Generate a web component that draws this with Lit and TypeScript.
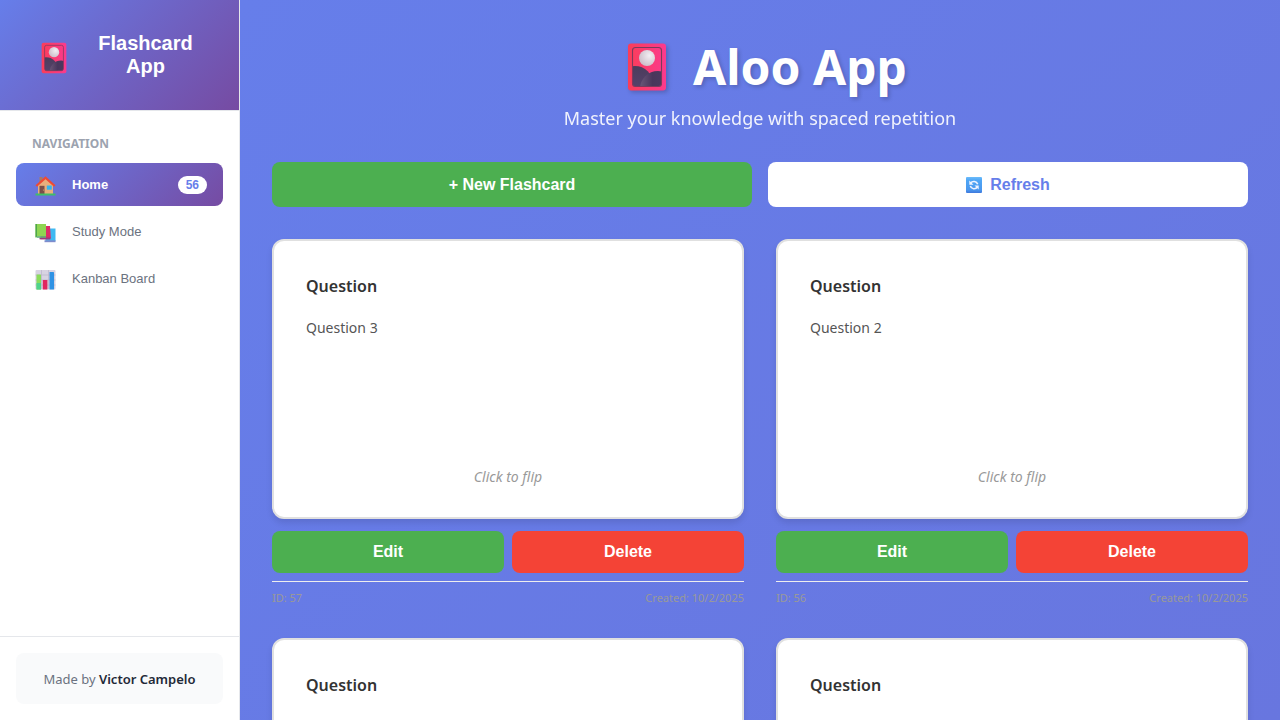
import { LitElement, html, css, svg } from "lit";
import { customElement, property, state } from "lit/decorators.js";

const cardIcon = html`
  <svg class="art" viewBox="0 0 40 48" aria-hidden="true">
    <defs>
      <linearGradient id="frame" x1="0" y1="0" x2="1" y2="0">
        <stop offset="0" stop-color="#fb3d58" />
        <stop offset="1" stop-color="#fb3a8e" />
      </linearGradient>
      <radialGradient id="moon" cx=".65" cy=".35" r=".75">
        <stop offset="0" stop-color="#f3eef3" />
        <stop offset="1" stop-color="#c9b9c6" />
      </radialGradient>
      <linearGradient id="hillA" x1="0" y1="0" x2="0" y2="1">
        <stop offset="0" stop-color="#4b3c5c" />
        <stop offset="1" stop-color="#5d4675" />
      </linearGradient>
      <linearGradient id="hillB" x1="0" y1="0" x2="1" y2="0">
        <stop offset="0" stop-color="#6a5677" />
        <stop offset=".35" stop-color="#49365b" />
        <stop offset="1" stop-color="#4f3c66" />
      </linearGradient>
      <clipPath id="inside"><rect x="5.5" y="4.5" width="29" height="39" rx="3" /></clipPath>
    </defs>
    <rect x="1" y="0.5" width="38" height="47" rx="3" fill="url(#frame)" />
    <g clip-path="url(#inside)">
      <circle cx="8" cy="41" r="18" fill="url(#hillA)" />
      <circle cx="31" cy="46" r="18" fill="url(#hillB)" />
    </g>
    <circle cx="20" cy="15" r="8" fill="url(#moon)" />
    <rect x="5.5" y="4.5" width="29" height="39" rx="3" fill="none" stroke="#7c3a5c" stroke-width="1.1" />
  </svg>`;

const navArt: Record<string, unknown> = {
  home: svg`
    <path d="M4 1h3v6H4z" fill="#a87c62"/>
    <path d="M2.500 9 10 2.500 17.500 9v9h-15z" fill="#e9ae7c"/>
    <path d="M10 .2 20 9.300l-1.500 1.500L10 3.200 1.500 10.800 0 9.300z" fill="#ee4a35"/>
    <path d="M4 9.800h5V18H4z" fill="#7b4f49"/><circle cx="8" cy="14" r=".6" fill="#d9a878"/>
    <path d="M11.300 9.500h5v4.200h-5z" fill="#35b4ee"/>
    <path d="M0 17.500h20V19.500H0z" fill="#3fbf68"/>`,
  study: svg`
    <path d="M10 5.500h10V18l-1 1h-9z" fill="#3fb9f2"/><path d="M9 17.300h11v1.900H9z" fill="#7f8ccc"/>
    <path d="M5 3h9.500l.8 11.500-1 1.800H5z" fill="#dd2c68"/><path d="M4 14.500h11v1.800H4z" fill="#9a3b7c"/>
    <path d="M0 1h10.500v12.500H1.500L0 15z" fill="#8fd552"/><path d="M0 1h1.500v13H0z" fill="#4fa54c"/>
    <path d="M1 13.200h9.500v1.600H1z" fill="#5fae7a"/>`,
  board: svg`
    <rect width="20" height="19.500" rx="1" fill="#d8d3e2"/>
    <path d="M0 5h20M0 10h20M0 15h20M6 0v19M13 0v19" stroke="#b7b0c6" stroke-width=".6"/>
    <rect x="1" y="4.500" width="4.500" height="15" rx=".6" fill="#8bdc5c"/>
    <path d="M1 13h4.500v6.500H1z" fill="#4fd38c"/>
    <rect x="7.300" y="10" width="4.600" height="9.500" rx=".6" fill="#e0255f"/>
    <rect x="14" y="2" width="4.500" height="17.500" rx=".6" fill="#2f92e4"/>`,
};

const refreshIcon = html`
  <svg class="refresh" viewBox="0 0 16 16" aria-hidden="true">
    <defs><linearGradient id="tile" x1="0" y1="0" x2="0" y2="1">
      <stop offset="0" stop-color="#6cbcfb" /><stop offset=".2" stop-color="#4fa6f6" />
      <stop offset=".8" stop-color="#4a97ee" /><stop offset="1" stop-color="#3f78dc" /></linearGradient></defs>
    <rect width="16" height="16" rx="1" fill="url(#tile)" />
    <path d="M4.600 6.200A4 4 0 0 1 11.700 7.200M11.400 10A4 4 0 0 1 4.300 9" fill="none" stroke="#eef3ff" stroke-width="1.600" />
    <path d="M3.300 3.500v4.200h4.200zM12.700 12.500V8.400H8.500z" fill="#eef3ff" />
  </svg>`;

@customElement("flash-card")
class FlashCard extends LitElement {
  @property({ type: Number }) number = 0;
  @property({ type: Number }) cardId = 0;

  static styles = css`
    :host { display: block; }
    .card {
      display: flex; flex-direction: column; box-sizing: border-box; min-height: 280px;
      padding: 32px; background: #fff; border: 2px solid #e0e0e0; border-radius: 12px;
      box-shadow: 0 4px 6px rgba(0, 0, 0, 0.1); cursor: pointer;
    }
    h3 { margin: 0 0 16px; font-size: 16px; line-height: 26px; font-weight: 600; color: #333; }
    .body { margin: 0; flex: 1; font-size: 14px; line-height: 26px; color: #555; }
    .hint { margin: 0; font-size: 14px; line-height: 16px; font-style: italic; text-align: center; color: #999; }
    .actions { display: flex; gap: 8px; margin: 12px 0 8px; }
    button {
      flex: 1; padding: 12px; border: 0; border-radius: 8px; color: #fff;
      font: bold 16px/18px "Liberation Sans", sans-serif; cursor: pointer;
    }
    .edit { background: #4caf50; }
    .delete { background: #f44336; }
    .meta {
      display: flex; justify-content: space-between; padding-top: 8px;
      border-top: 1px solid #eee; font-size: 11px; line-height: 16px; color: #999;
    }
  `;

  render() {
    return html`
      <article class="card">
        <h3>Question</h3>
        <p class="body">Question ${this.number}</p>
        <p class="hint">Click to flip</p>
      </article>
      <div class="actions">
        <button class="edit">Edit</button>
        <button class="delete">Delete</button>
      </div>
      <div class="meta"><span>ID: ${this.cardId}</span><span>Created: 10/2/2025</span></div>
    `;
  }
}

@customElement("app-root")
class AppRoot extends LitElement {
  @state() private active = "home";

  private items = [
    { id: "home", label: "Home", count: 56 },
    { id: "study", label: "Study Mode", count: 0 },
    { id: "board", label: "Kanban Board", count: 0 },
  ];
  private cards = [
    { number: 3, id: 57 },
    { number: 2, id: 56 },
    { number: 1, id: 55 },
    { number: 0, id: 54 },
  ];

  static styles = css`
    :host { display: flex; height: 100vh; font-family: "Noto Sans", sans-serif; }
    .sidebar {
      display: flex; flex-direction: column; flex: none; box-sizing: border-box;
      width: 240px; background: #fff; border-right: 1px solid #e5e7eb;
    }
    .brand {
      display: flex; align-items: center; gap: 8px; padding: 32px;
      background: linear-gradient(135deg, #667eea 0%, #764ba2 100%);
      border-bottom: 1px solid #e5e7eb;
      font-family: "Liberation Sans", sans-serif; color: #fff;
    }
    .glyph { display: flex; justify-content: center; }
    .brand .glyph { width: 44px; padding-top: 5px; }
    .brand .art { width: 26px; height: 32px; }
    .brand h2 { flex: 1; margin: 0; font-size: 20px; line-height: 23px; text-align: center; }
    nav { flex: 1; padding: 24px 16px; }
    .section { margin: 0 0 10px; padding: 0 16px; font-size: 12px; line-height: 18px; font-weight: 700; color: #9ca3af; }
    .items { display: flex; flex-direction: column; gap: 4px; }
    .item {
      display: flex; align-items: center; gap: 16px; min-height: 43px; padding: 0 16px 0 19px;
      border: 0; border-radius: 8px; background: none; color: #6b7280; text-align: left;
      font: 13px/16px "Liberation Sans", sans-serif; cursor: pointer;
    }
    .item svg { width: 21px; height: 20px; margin-top: 3px; }
    .item .label { flex: 1; }
    .item.active { background: linear-gradient(135deg, #667eea 0%, #764ba2 100%); color: #fff; font-weight: 700; }
    .badge {
      padding: 0 8px; border-radius: 12px; background: #fff; color: #667eea;
      font-size: 12px; line-height: 18px; font-weight: 700;
    }
    .foot { padding: 16px; border-top: 1px solid #e5e7eb; }
    .credit {
      margin: 0; padding: 16px 8px 14px; border-radius: 8px; background: #f9fafb; text-align: center;
      font-size: 13px; line-height: 21px; color: #6b7280;
    }
    .credit strong { font-weight: 600; color: #1f2937; }
    main {
      flex: 1; min-width: 0; box-sizing: border-box; padding: 32px; overflow-y: auto; scrollbar-width: none;
      background: linear-gradient(135deg, #667eea 0%, #6876df 100%);
    }
    header { text-align: center; color: #fff; }
    h1 {
      display: flex; justify-content: center; align-items: center; gap: 12px; margin: 0 0 4px;
      font-size: 48px; line-height: 70px; text-shadow: 2px 2px 4px rgba(0, 0, 0, 0.2);
    }
    h1 .glyph { width: 68px; }
    h1 .art { width: 40px; height: 48px; filter: drop-shadow(2px 2px 2px rgba(0, 0, 0, 0.2)); }
    .tagline { margin: 0 0 32px; font-size: 18px; line-height: 24px; opacity: 0.9; }
    .toolbar { display: grid; grid-template-columns: 1fr 1fr; gap: 16px; margin-bottom: 32px; }
    .toolbar button {
      display: flex; align-items: center; justify-content: center; gap: 8px; min-height: 45px; padding: 0 24px;
      border: 0; border-radius: 8px; font: bold 16px/18px "Liberation Sans", sans-serif; cursor: pointer;
    }
    .new { background: #4caf50; color: #fff; }
    .reload { background: #fff; color: #667eea; }
    .refresh { width: 16px; height: 16px; }
    .cards { display: grid; grid-template-columns: repeat(auto-fill, minmax(350px, 1fr)); gap: 32px; }
  `;

  render() {
    return html`
      <aside class="sidebar">
        <div class="brand"><span class="glyph">${cardIcon}</span><h2>Flashcard App</h2></div>
        <nav>
          <p class="section">NAVIGATION</p>
          <div class="items">
            ${this.items.map(
              (item) => html`
                <button class="item ${item.id === this.active ? "active" : ""}" @click=${() => (this.active = item.id)}>
                  <svg viewBox="0 0 20 20" aria-hidden="true">${navArt[item.id]}</svg>
                  <span class="label">${item.label}</span>
                  ${item.count ? html`<span class="badge">${item.count}</span>` : ""}
                </button>`
            )}
          </div>
        </nav>
        <div class="foot"><p class="credit">Made by <strong>Victor Campelo</strong></p></div>
      </aside>
      <main>
        <header>
          <h1><span class="glyph">${cardIcon}</span><span>Aloo App</span></h1>
          <p class="tagline">Master your knowledge with spaced repetition</p>
        </header>
        <div class="toolbar">
          <button class="new">+ New Flashcard</button>
          <button class="reload">${refreshIcon}<span>Refresh</span></button>
        </div>
        <section class="cards">
          ${this.cards.map((c) => html`<flash-card .number=${c.number} .cardId=${c.id}></flash-card>`)}
        </section>
      </main>
    `;
  }
}
